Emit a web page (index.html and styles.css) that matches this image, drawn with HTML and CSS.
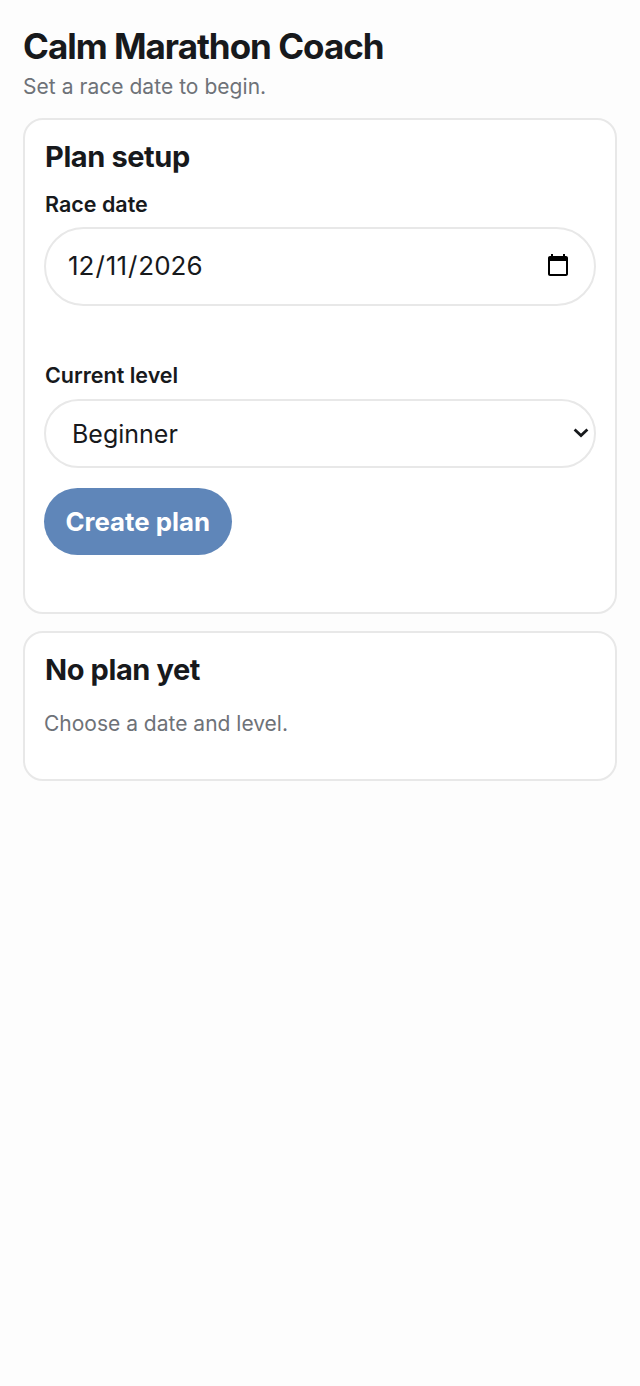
FILE: index.html
```html
<!DOCTYPE html>
<html lang="en">
<head>
<meta charset="utf-8">
<title>Calm Marathon Coach</title>
<link rel="stylesheet" href="styles.css">
</head>
<body>
<main class="app">
  <header class="head">
    <h1 class="title">Calm Marathon Coach</h1>
    <p class="sub">Set a race date to begin.</p>
  </header>
  <section class="card setup">
    <h2 class="card-title">Plan setup</h2>
    <label class="label label-date" for="race">Race date</label>
    <input class="field date" id="race" type="date" value="2026-12-11">
    <label class="label label-level" for="level">Current level</label>
    <div class="select-wrap">
      <select class="field level" id="level">
        <option>Beginner</option>
        <option>Intermediate</option>
        <option>Advanced</option>
      </select>
      <svg class="chevron" width="16" height="10" viewBox="0 0 16 10" aria-hidden="true">
        <path d="M1.6 1.6 8 7.6l6.4-6" fill="none" stroke="#17191c" stroke-width="2.8"/>
      </svg>
    </div>
    <button class="primary" type="button">Create plan</button>
  </section>
  <section class="card empty">
    <h2 class="card-title">No plan yet</h2>
    <p class="muted">Choose a date and level.</p>
  </section>
</main>
</body>
</html>
```

FILE: styles.css
```css
* { box-sizing: border-box; }
html, body { margin: 0; height: 100%; }
body {
  background: #fdfdfd;
  color: #17191c;
  font-family: Inter, "Liberation Sans", sans-serif;
}
.app {
  display: flex;
  flex-direction: column;
  gap: 17px;
  padding: 26px 23px 0;
}
.head { display: flex; flex-direction: column; height: 75px; }
.title {
  margin: 0;
  font-size: 35px;
  line-height: 41px;
  font-weight: 700;
  letter-spacing: -1px;
}
.sub {
  margin: 7px 0 0;
  font-size: 21px;
  line-height: 25px;
  letter-spacing: 0.04px;
  color: #6e7278;
}
.card {
  display: flex;
  flex-direction: column;
  align-items: flex-start;
  background: #fff;
  border: 2px solid #e8e8e8;
  border-radius: 20px;
  padding: 20px 19px 20px 20px;
}
.setup { height: 496px; }
.empty { height: 150px; }
.card-title {
  margin: 0;
  font-size: 29px;
  line-height: 34px;
  font-weight: 700;
  letter-spacing: -0.4px;
}
.label {
  font-size: 21.5px;
  line-height: 26px;
  font-weight: 600;
}
.label-date { margin-top: 17px; }
.label-level { margin-top: 56px; }
.field {
  display: block;
  width: 100%;
  background: #fff;
  border: 2px solid #e8e8e8;
  color: #17191c;
  font-family: Inter, "Liberation Sans", sans-serif;
}
.date {
  width: calc(100% + 1px);
  height: 79px;
  margin: 10px 0 0 -1px;
  padding: 0 23px 2px 21px;
  border-radius: 40px;
  font-size: 26px;
}
.date::-webkit-calendar-picker-indicator {
  width: 26px;
  height: 26px;
  margin: 0;
  padding: 0;
}
.select-wrap {
  position: relative;
  width: calc(100% + 1px);
  margin: 11px 0 0 -1px;
}
.level {
  appearance: none;
  height: 69px;
  padding: 0 26px;
  border-radius: 35px;
  font-size: 25px;
}
.chevron {
  position: absolute;
  top: 29px;
  right: 7px;
  pointer-events: none;
}
.primary {
  margin: 20px 0 0 -1px;
  height: 67px;
  padding: 0 21.5px;
  border: 0;
  border-radius: 34px;
  background: #5f86b9;
  color: #fff;
  font-family: Inter, "Liberation Sans", sans-serif;
  font-size: 25.8px;
  font-weight: 700;
}
.muted {
  margin: 24px 0 0 -1px;
  font-size: 21px;
  line-height: 25px;
  color: #6e7278;
}
```
